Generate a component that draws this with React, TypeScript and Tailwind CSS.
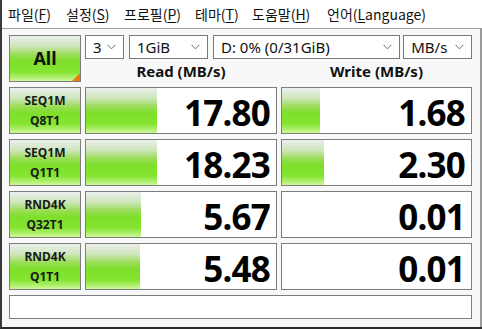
import { type ReactNode } from "react";

const bar =
  "bg-[linear-gradient(to_bottom,#ebeeeb_0%,#cfe6bd_22%,#98dd55_42%,#7fe02c_55%,#84e430_80%,#cdf899_100%)]";

function Menu({ label, k, w }: { label: string; k: string; w: string }) {
  return (
    <div className={`${w} shrink-0`}>
      {label}(<span className="underline underline-offset-2">{k}</span>)
    </div>
  );
}

function Chevron() {
  return (
    <svg width="9" height="6" viewBox="0 0 9 6" className="shrink-0">
      <path d="M0.5 0.8 L4.5 4.8 L8.5 0.8" fill="none" stroke="#6a6a6a" strokeWidth="1" />
    </svg>
  );
}

function Select({ w, children }: { w: string; children: ReactNode }) {
  return (
    <div
      className={`${w} flex h-[24px] items-center justify-between border border-[#7a7a7a] bg-white pl-[7px] pr-[7px] text-[15px] text-[#111]`}
    >
      <span>{children}</span>
      <Chevron />
    </div>
  );
}

function Label({ a, b }: { a: string; b: string }) {
  return (
    <div
      className={`flex h-[47px] flex-col items-center justify-center border border-[#7d7d7d] ${bar} text-[12px] font-bold leading-[20px] text-[#1a1a1a]`}
    >
      <span>{a}</span>
      <span>{b}</span>
    </div>
  );
}

function Cell({ value, pct }: { value: string; pct: number }) {
  return (
    <div className="relative flex h-[47px] items-center justify-end border border-[#7d7d7d] bg-white pr-[6px]">
      {pct > 0 && (
        <div className={`absolute bottom-0 left-0 top-0 ${bar}`} style={{ width: `${pct}px` }} />
      )}
      <span className="relative pt-[4px] text-[35px] font-bold leading-none tracking-[-0.8px] text-black">
        {value}
      </span>
    </div>
  );
}

const rows = [
  { a: "SEQ1M", b: "Q8T1", r: "17.80", rw: 71, w: "1.68", ww: 38 },
  { a: "SEQ1M", b: "Q1T1", r: "18.23", rw: 71, w: "2.30", ww: 42 },
  { a: "RND4K", b: "Q32T1", r: "5.67", rw: 55, w: "0.01", ww: 0 },
  { a: "RND4K", b: "Q1T1", r: "5.48", rw: 54, w: "0.01", ww: 0 },
];

export default function App() {
  return (
    <div className="h-[329px] w-[482px] overflow-hidden border-b-2 border-l-2 border-b-[#2b2b2b] border-l-[#3a3a3a] bg-white font-['Noto_Sans','Noto_Sans_CJK_KR',sans-serif]">
      {/* menu bar */}
      <div className="flex h-[28px] items-center pl-[6px] text-[14px] text-[#111] font-['Noto_Sans_CJK_KR','Noto_Sans',sans-serif]">
        <Menu label="파일" k="F" w="w-[58px]" />
        <Menu label="설정" k="S" w="w-[58px]" />
        <Menu label="프로필" k="P" w="w-[71px]" />
        <Menu label="테마" k="T" w="w-[57px]" />
        <Menu label="도움말" k="H" w="w-[75px]" />
        <div>
          언어(<span className="underline underline-offset-2">L</span>anguage)
        </div>
      </div>

      {/* body */}
      <div className="h-[299px] border-r-2 border-t border-r-[#9a9a9a] border-t-[#a0a0a0] bg-[#f8f8f8] pl-[7px] pt-[6px]">
        <div className="grid grid-cols-[72px_192px_191px] gap-x-[4px] gap-y-[5px]">
          {/* top row */}
          <div className={`relative flex h-[47px] items-center justify-center border border-[#7d7d7d] ${bar}`}>
            <span className="text-[18px] font-bold text-[#111]">All</span>
            <div className="absolute bottom-0 right-0 h-0 w-0 border-b-[8px] border-l-[8px] border-b-[#f07a12] border-l-transparent" />
          </div>
          <div className="flex h-[47px] flex-col">
            <div className="flex gap-[5px]">
              <Select w="w-[39px]">3</Select>
              <Select w="w-[79px]">1GiB</Select>
            </div>
            <div className="flex flex-1 items-center justify-center pt-[1px] text-[15px] font-bold text-[#111]">
              Read (MB/s)
            </div>
          </div>
          <div className="flex h-[47px] flex-col">
            <div className="-ml-[68px] flex gap-[3px]">
              <Select w="w-[188px]">D: 0% (0/31GiB)</Select>
              <Select w="w-[69px]">MB/s</Select>
            </div>
            <div className="flex flex-1 items-center justify-center pt-[1px] text-[15px] font-bold text-[#111]">
              Write (MB/s)
            </div>
          </div>

          {rows.map((r) => (
            <div key={r.a + r.b} className="contents">
              <Label a={r.a} b={r.b} />
              <Cell value={r.r} pct={r.rw} />
              <Cell value={r.w} pct={r.ww} />
            </div>
          ))}

          {/* status bar */}
          <div className="col-span-3 h-[24px] border border-[#7d7d7d] bg-white" />
        </div>
      </div>
    </div>
  );
}
